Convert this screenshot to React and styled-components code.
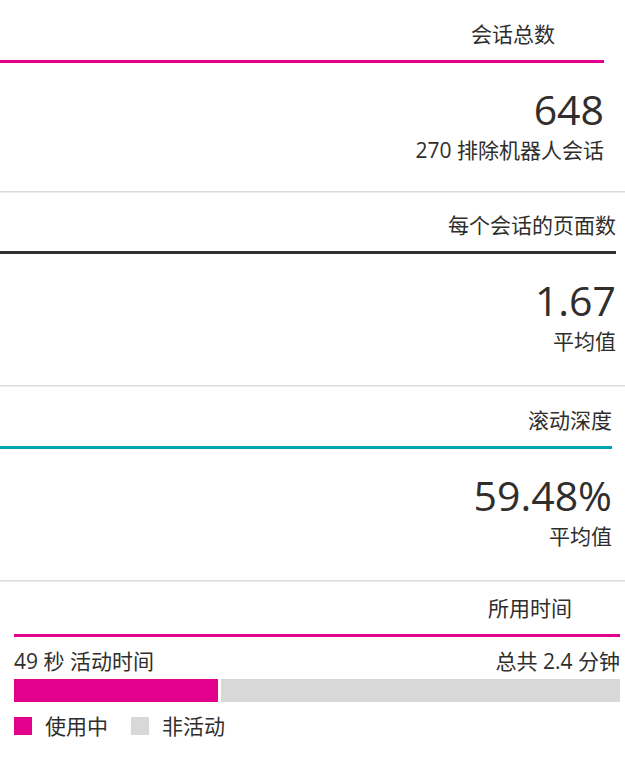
import React from 'react';
import styled, { createGlobalStyle } from 'styled-components';

const GlobalStyle = createGlobalStyle`
  body {
    margin: 0;
    background: #ffffff;
    overflow: hidden;
    font-family: 'Segoe UI', 'Open Sans', 'Noto Sans CJK SC', sans-serif;
    color: #2f2e2d;
  }
`;

const Page = styled.main`
  display: flex;
  flex-direction: column;
  width: 625px;
`;

const Card = styled.section`
  display: flex;
  flex-direction: column;
  padding: ${(props) => props.$top}px ${(props) => props.$right}px ${(props) => props.$bottom}px ${(props) => props.$left || 0}px;
  background: #ffffff;
  border-bottom: ${(props) => (props.$last ? 'none' : '1px solid #dcdcdc')};
  box-shadow: ${(props) => (props.$last ? 'none' : '0 1px 0 #ececec')};
  margin-bottom: ${(props) => (props.$last ? 0 : 1)}px;
`;

const Title = styled.h2`
  margin: 0 0 12px;
  padding-right: ${(props) => props.$offset || 0}px;
  font-size: 21px;
  font-weight: 400;
  line-height: 28px;
  text-align: right;
`;

const AccentLine = styled.div`
  height: 3px;
  background: ${(props) => props.$color};
`;

const Value = styled.div`
  margin-top: 22px;
  font-size: 41px;
  line-height: 48px;
  text-align: right;
`;

const Note = styled.div`
  margin-top: 3px;
  font-size: 21px;
  line-height: 28px;
  text-align: right;
`;

const TimeRow = styled.div`
  display: flex;
  justify-content: space-between;
  margin-top: 10px;
  font-size: 21px;
  line-height: 28px;
`;

const Bar = styled.div`
  display: flex;
  gap: 3px;
  height: 23px;
  margin-top: 4px;
`;

const Segment = styled.div`
  background: ${(props) => props.$color};
  flex: ${(props) => (props.$fill ? 1 : 'none')};
`;

const Legend = styled.div`
  display: flex;
  align-items: center;
  gap: 23px;
  margin-top: 10px;
`;

const LegendItem = styled.div`
  display: flex;
  align-items: center;
  gap: 13px;
  font-size: 21px;
  line-height: 28px;
`;

const Swatch = styled.span`
  width: 18px;
  height: 18px;
  background: ${(props) => props.$color};
`;

const PINK = '#e3008c';
const GREY = '#d8d8d8';

const metrics = [
  { title: '会话总数', value: '648', note: '270 排除机器人会话', color: PINK, top: 20, bottom: 27, right: 21, offset: 49 },
  { title: '每个会话的页面数', value: '1.67', note: '平均值', color: '#323130', top: 18, bottom: 30, right: 9 },
  { title: '滚动深度', value: '59.48%', note: '平均值', color: '#00a7b3', top: 19, bottom: 30, right: 13 },
];

export default function App() {
  const active = 49;
  const total = 2.4 * 60;
  const barWidth = 606;
  const activeWidth = Math.round((active / total) * barWidth) - 2;

  return (
    <>
      <GlobalStyle />
      <Page>
        {metrics.map((m) => (
          <Card key={m.title} $top={m.top} $bottom={m.bottom} $right={m.right}>
            <Title $offset={m.offset}>{m.title}</Title>
            <AccentLine $color={m.color} />
            <Value>{m.value}</Value>
            <Note>{m.note}</Note>
          </Card>
        ))}
        <Card $top={12} $bottom={20} $right={5} $left={14} $last>
          <Title $offset={48}>所用时间</Title>
          <AccentLine $color={PINK} />
          <TimeRow>
            <span>{active} 秒 活动时间</span>
            <span>总共 2.4 分钟</span>
          </TimeRow>
          <Bar>
            <Segment $color={PINK} style={{ width: activeWidth }} />
            <Segment $color={GREY} $fill />
          </Bar>
          <Legend>
            <LegendItem>
              <Swatch $color={PINK} />
              使用中
            </LegendItem>
            <LegendItem>
              <Swatch $color={GREY} />
              非活动
            </LegendItem>
          </Legend>
        </Card>
      </Page>
    </>
  );
}
